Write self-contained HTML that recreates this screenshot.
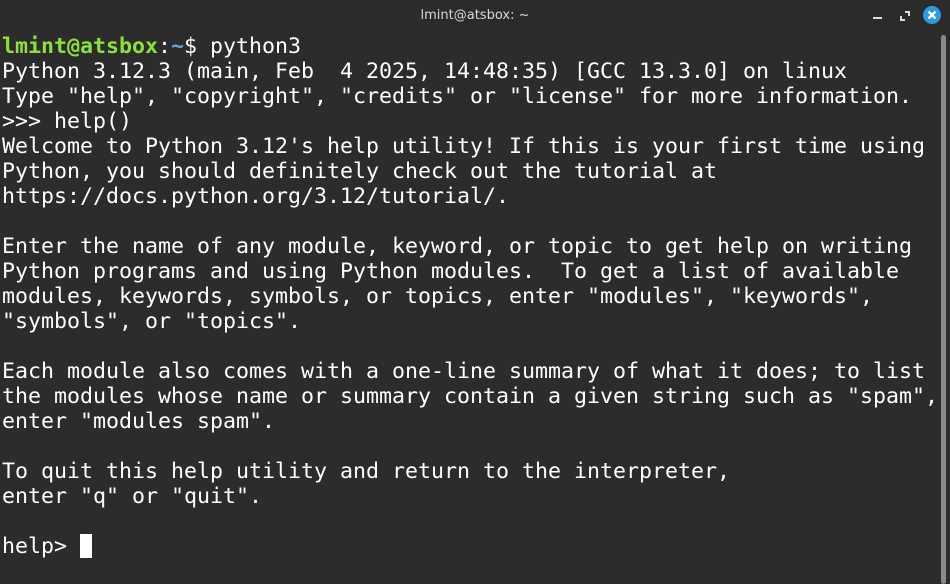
<!DOCTYPE html>
<html><head><meta charset="utf-8"><style>
html,body{margin:0;padding:0;width:950px;height:584px;overflow:hidden;background:#2c2c2c;}
.title{position:absolute;left:0;top:0;width:950px;height:33px;background:#2b2b2b;color:#d8d8d8;font:13px "DejaVu Sans","Liberation Sans",sans-serif;text-align:center;line-height:32px;}
pre{position:absolute;left:2px;top:34px;margin:0;font-family:"DejaVu Sans Mono","Liberation Mono",monospace;font-size:21.6px;line-height:25px;color:#ffffff;}
.g{color:#8ae234;font-weight:bold}
.b{color:#729fcf;font-weight:bold}
.cur{display:inline-block;width:12px;height:24px;background:#fff;vertical-align:top;}
.close{position:absolute;left:923px;top:6px;width:18px;height:18px;border-radius:50%;background:#2a9be0;}
.sb{position:absolute;left:941px;top:35px;width:5px;height:549px;background:#8a8a8a;border-radius:3px;}
</style></head><body>
<div class="title">lmint@atsbox: ~</div>
<div style="position:absolute;left:873px;top:17px;width:9px;height:2px;background:#ddd"></div>
<svg style="position:absolute;left:900px;top:11px" width="10" height="10"><path d="M1 5V9H5M5 1H9V5" stroke="#ddd" stroke-width="2" fill="none"/></svg>
<div class="close"><svg width="18" height="18"><path d="M5.5 5.5L12.5 12.5M12.5 5.5L5.5 12.5" stroke="#fff" stroke-width="2.4"/></svg></div>
<div class="sb"></div>
<pre><span class="g">lmint@atsbox</span>:<span class="b">~</span>$ python3
Python 3.12.3 (main, Feb  4 2025, 14:48:35) [GCC 13.3.0] on linux
Type "help", "copyright", "credits" or "license" for more information.
&gt;&gt;&gt; help()
Welcome to Python 3.12's help utility! If this is your first time using
Python, you should definitely check out the tutorial at
https://docs.python.org/3.12/tutorial/.

Enter the name of any module, keyword, or topic to get help on writing
Python programs and using Python modules.  To get a list of available
modules, keywords, symbols, or topics, enter "modules", "keywords",
"symbols", or "topics".

Each module also comes with a one-line summary of what it does; to list
the modules whose name or summary contain a given string such as "spam",
enter "modules spam".

To quit this help utility and return to the interpreter,
enter "q" or "quit".

help&gt; <span class="cur"></span></pre>
</body></html>
